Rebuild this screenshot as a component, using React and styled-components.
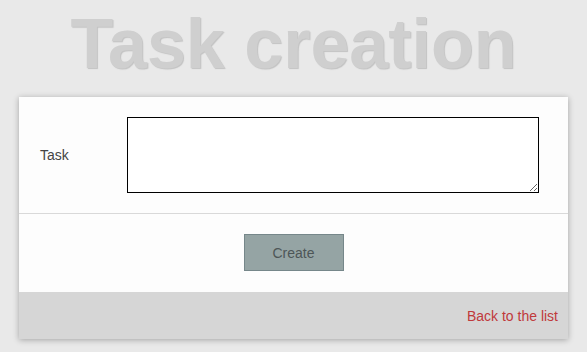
import React from "react";
import styled, { createGlobalStyle } from "styled-components";

const GlobalStyle = createGlobalStyle`
  html, body {
    margin: 0;
    padding: 0;
    background: #e9e9e9;
    font-family: "Liberation Sans", Arial, sans-serif;
  }
`;

const Page = styled.div`
  padding: 9px 19px 12px;
`;

const Title = styled.h1`
  margin: 0 0 18px;
  font-size: 70px;
  line-height: 70px;
  font-weight: 700;
  text-align: center;
  color: #cfcfcf;
  text-shadow: 1px 1px 1px #c2c2c2;
`;

const Card = styled.div`
  background: #fdfdfd;
  box-shadow: 0 1px 6px rgba(0, 0, 0, 0.3);
`;

const Section = styled.div`
  padding: ${({ $pad }) => $pad || "20px"};
  border-bottom: ${({ $divider }) => ($divider ? "1px solid #d9d9d9" : "none")};
  display: flex;
  align-items: center;
  justify-content: ${({ $center }) => ($center ? "center" : "flex-start")};
`;

const Label = styled.label`
  width: 87px;
  padding-left: 1px;
  font-size: 14px;
  color: #444;
`;

const TextArea = styled.textarea`
  box-sizing: border-box;
  width: 412px;
  height: 76px;
  border: 1px solid #000;
  border-radius: 0;
  background: #fff;
  font-family: inherit;
  font-size: 14px;
  padding: 4px;
  margin: 0;
  display: block;
`;

const Button = styled.button`
  box-sizing: border-box;
  width: 100px;
  height: 37px;
  background: #95a4a4;
  border: 1px solid #76878a;
  color: #4d5657;
  font-family: inherit;
  font-size: 14px;
  cursor: pointer;
`;

const Footer = styled.div`
  background: #d6d6d6;
  height: 47px;
  padding-right: 10px;
  display: flex;
  align-items: center;
  justify-content: flex-end;
`;

const BackLink = styled.a`
  color: #c0393b;
  font-size: 14px;
  text-decoration: none;
  margin-top: 1px;
`;

export default function App() {
  return (
    <>
      <GlobalStyle />
      <Page>
        <Title>Task creation</Title>
        <Card>
          <Section $divider>
            <Label htmlFor="task">Task</Label>
            <TextArea id="task" />
          </Section>
          <Section $center $pad="20px 20px 21px">
            <Button type="button">Create</Button>
          </Section>
          <Footer>
            <BackLink href="#">Back to the list</BackLink>
          </Footer>
        </Card>
      </Page>
    </>
  );
}
